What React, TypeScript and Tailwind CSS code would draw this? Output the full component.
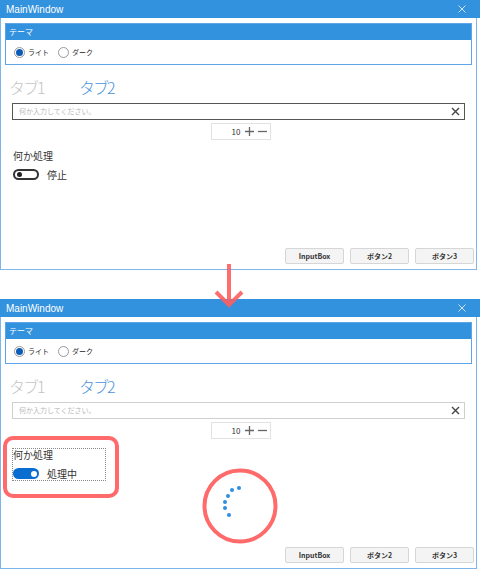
const jp = { fontFamily: '"Noto Sans CJK JP", "Noto Sans", sans-serif' };

function Radio({ checked, label }: { checked?: boolean; label: string }) {
  return (
    <div className="flex items-center gap-[3px]">
      <div className="w-[11px] h-[11px] rounded-full border border-[#9a9a9a] bg-white flex items-center justify-center">
        {checked && <div className="w-[7px] h-[7px] rounded-full bg-[#0b5cb5]"></div>}
      </div>
      <span className="text-[7px] text-[#222]">{label}</span>
    </div>
  );
}

function Toggle({ on }: { on?: boolean }) {
  if (on) {
    return (
      <div className="w-[26px] h-[11px] rounded-full bg-[#0a6ed1] flex items-center justify-end pr-[2px]">
        <div className="w-[6px] h-[6px] rounded-full bg-white"></div>
      </div>
    );
  }
  return (
    <div className="w-[26px] h-[11px] rounded-full border-2 border-[#333] flex items-center pl-[2px]">
      <div className="w-[5px] h-[5px] rounded-full bg-[#222]"></div>
    </div>
  );
}

function Window({ busy }: { busy?: boolean }) {
  return (
    <div className="relative h-[270px] w-[477px] border border-t-0 border-[#7db6ea] flex flex-col bg-white" style={jp}>
      {/* Title bar */}
      <div className="h-[18px] -mx-px bg-[#3392de] flex items-center justify-between pl-[6px] pr-[14px] w-[480px]">
        <span className="text-[10px] text-white" style={{ fontFamily: '"Liberation Sans", Arial, sans-serif' }}>MainWindow</span>
        <svg width="8" height="8" viewBox="0 0 8 8">
          <path d="M0.5 0.5 L7.5 7.5 M7.5 0.5 L0.5 7.5" stroke="#cfe4f8" strokeWidth="1" />
        </svg>
      </div>

      {/* Theme group */}
      <div className="mx-[4px] mt-[5px] border border-[#5fa4e6] h-[42px] flex flex-col">
        <div className="h-[16px] bg-[#3392de] flex items-center px-[3px]">
          <span className="text-[8px] text-white">テーマ</span>
        </div>
        <div className="flex-1 flex items-center gap-[9px] pl-[8px]">
          <Radio checked label="ライト" />
          <Radio label="ダーク" />
        </div>
      </div>

      {/* Tabs */}
      <div className="flex items-center h-[22px] mt-[11px] pl-[8px] gap-[36px]">
        <span className="w-[34px] text-[16px] tracking-[-2px] font-light text-[#c4c4c4] whitespace-nowrap">タブ1</span>
        <span className="w-[34px] text-[16px] tracking-[-2px] font-light text-[#4d93dc] whitespace-nowrap">タブ2</span>
      </div>

      {/* Text input */}
      <div
        className={`mx-[11px] mt-[5px] h-[17px] flex items-center justify-between pl-[6px] pr-[4px] border ${
          busy ? 'border-[#cfcfcf]' : 'border-[#555]'
        }`}
      >
        <span className="text-[7px] text-[#b8b8b8]">何か入力してください。</span>
        <svg width="9" height="9" viewBox="0 0 9 9">
          <path d="M1 1 L8 8 M8 1 L1 8" stroke="#444" strokeWidth="1.4" />
        </svg>
      </div>

      {/* Number box */}
      <div className="flex justify-center mt-[3px]">
        <div className="ml-[4px] w-[60px] h-[17px] border border-[#e2e2e2] flex items-center justify-end pr-[3px] gap-[4px]">
          <span className="text-[8px] text-[#333]">10</span>
          <svg width="9" height="9" viewBox="0 0 9 9">
            <path d="M4.5 0 V9 M0 4.5 H9" stroke="#666" strokeWidth="1.3" />
          </svg>
          <svg width="9" height="9" viewBox="0 0 9 9">
            <path d="M0 4.5 H9" stroke="#666" strokeWidth="1.3" />
          </svg>
        </div>
      </div>

      {/* Process block */}
      <div className="mt-[9px] ml-[11px]">
        <div
          className={`w-[94px] h-[33px] flex flex-col border border-dotted ${
            busy ? 'border-[#888]' : 'border-transparent'
          }`}
        >
          <span className="text-[10px] text-[#333] leading-[12px]">何か処理</span>
          <div className="flex items-center gap-[8px] mt-[5px]">
            <Toggle on={busy} />
            <span className="text-[10px] text-[#333]">{busy ? '処理中' : '停止'}</span>
          </div>
        </div>
      </div>

      <div className="flex-1"></div>

      {/* Buttons */}
      <div className="flex justify-end gap-[6px] pr-[2px] mb-[5px]">
        {['InputBox', 'ボタン2', 'ボタン3'].map((b) => (
          <div
            key={b}
            className="w-[59px] h-[16px] rounded-[2px] border border-[#d6d6d6] bg-[#f4f4f4] flex items-center justify-center"
          >
            <span className="text-[7px] font-semibold text-[#333]">{b}</span>
          </div>
        ))}
      </div>

      {busy && (
        <>
          {/* Highlight around process block */}
          <div className="absolute left-[2px] top-[137px] w-[116px] h-[62px] rounded-[10px] border-4 border-[#ff6b6b]"></div>
          {/* Spinner highlight */}
          <svg className="absolute left-[200px] top-[168px]" width="78" height="78" viewBox="0 0 78 78">
            <circle cx="39" cy="39" r="35.5" fill="none" stroke="#ff6b6b" strokeWidth="4" />
            {[
              [38, 21],
              [31, 23],
              [27, 29],
              [24, 35],
              [24, 41],
              [28, 48],
            ].map(([x, y], i) => (
              <circle key={i} cx={x} cy={y} r="2" fill="#2f8fe0" />
            ))}
          </svg>
        </>
      )}
    </div>
  );
}

export default function App() {
  return (
    <div className="relative w-[480px] h-[569px] bg-white overflow-hidden">
      <Window />
      <div className="h-[29px]"></div>
      <Window busy />
      {/* Down arrow between the windows */}
      <svg className="absolute left-[213px] top-[264px] opacity-90" width="32" height="46" viewBox="0 0 32 46">
        <path d="M16 0 V41" stroke="#ff5f5f" strokeWidth="4" />
        <path d="M3 28 L16 41 L29 28" stroke="#ff5f5f" strokeWidth="4" fill="none" />
      </svg>
    </div>
  );
}
